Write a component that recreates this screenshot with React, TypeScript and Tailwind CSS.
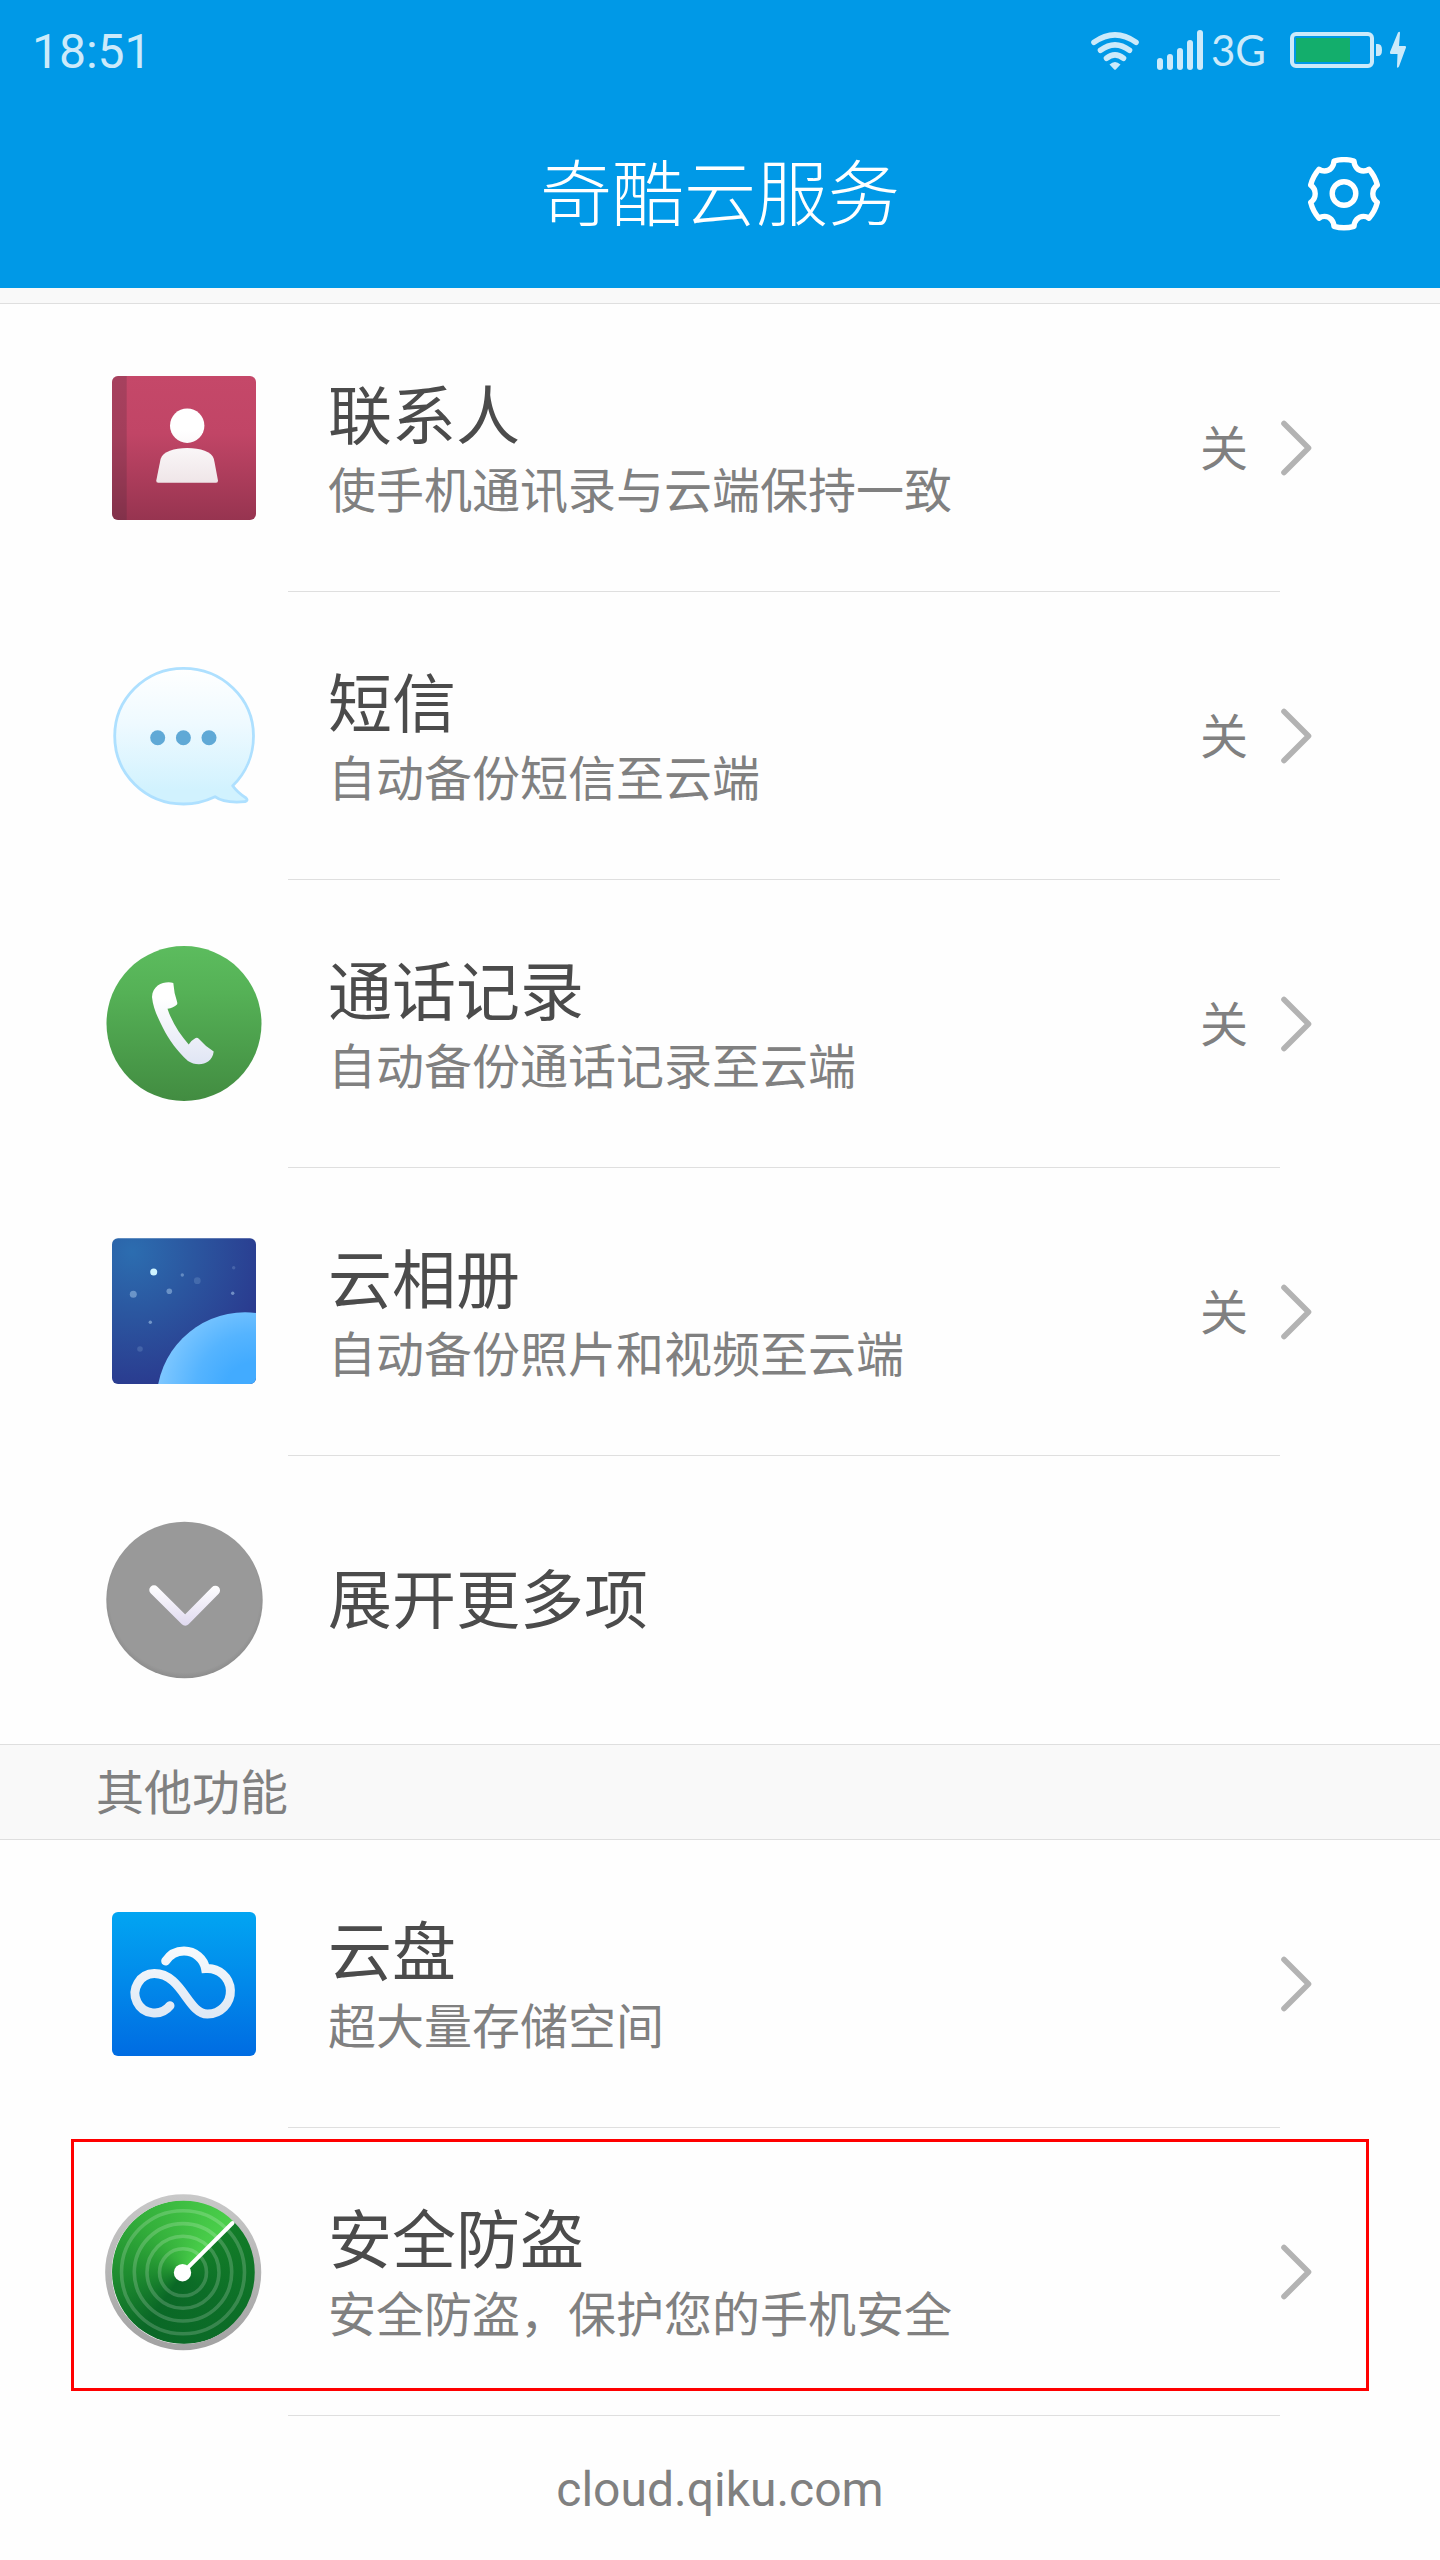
import React from "react";

type RowProps = {
  icon: React.ReactNode;
  title: string;
  desc?: string;
  state?: string;
  marked?: boolean;
};

function ContactsIcon() {
  return (
    <svg viewBox="0 0 160 160" className="size-40 shrink-0" aria-hidden="true">
      <defs>
        <linearGradient id="book" x1="0" y1="0" x2="0" y2="1">
          <stop offset="0" stopColor="#c54869" />
          <stop offset="0.4" stopColor="#c14566" />
          <stop offset="1" stopColor="#973450" />
        </linearGradient>
        <linearGradient id="person" x1="0" y1="40" x2="0" y2="115" gradientUnits="userSpaceOnUse">
          <stop offset="0.3" stopColor="#ffffff" />
          <stop offset="1" stopColor="#efe5e8" />
        </linearGradient>
      </defs>
      <rect x="8" y="8" width="144" height="144" rx="6" fill="url(#book)" />
      <path d="M14 8H22.7V152H14A6 6 0 0 1 8 146V14A6 6 0 0 1 14 8Z" fill="#3c2838" opacity="0.22" />
      <circle cx="83.2" cy="57.7" r="17.2" fill="url(#person)" />
      <path
        d="M52.3 112.5L56.6 91C59 83.5 70 80 83.2 80C96.5 80 107.5 83.5 109.9 91L114 112.5Q114.2 114.8 112 114.8H54.3Q52 114.8 52.3 112.5Z"
        fill="url(#person)"
      />
    </svg>
  );
}

function MessageIcon() {
  return (
    <svg viewBox="0 0 160 160" className="size-40 shrink-0" aria-hidden="true">
      <defs>
        <linearGradient id="bubble" x1="0" y1="0" x2="0" y2="1">
          <stop offset="0" stopColor="#ffffff" />
          <stop offset="0.4" stopColor="#effaff" />
          <stop offset="0.9" stopColor="#d1f2fe" />
        </linearGradient>
      </defs>
      <path
        d="M128.7 129.7C142 117 149.5 99 149.5 80C149.5 42 118 12.3 79.5 12.3C41 12.3 10.7 43 10.7 80C10.7 118 41 148 79.5 148C91 148 101 145.5 111 140.7C118 146 132 146.5 141 145.7Q144.5 144.5 142 142C136 138 131 133 128.7 129.7Z"
        fill="url(#bubble)"
        stroke="#aee0ff"
        strokeWidth="2.8"
        strokeLinejoin="round"
      />
      <circle cx="53.7" cy="81.7" r="7.5" fill="#60a9d6" />
      <circle cx="79.4" cy="81.7" r="7.5" fill="#60a9d6" />
      <circle cx="105" cy="81.7" r="7.5" fill="#60a9d6" />
    </svg>
  );
}

function PhoneIcon() {
  return (
    <svg viewBox="0 0 160 160" className="size-40 shrink-0" aria-hidden="true">
      <defs>
        <linearGradient id="call" x1="0" y1="0" x2="0" y2="1">
          <stop offset="0" stopColor="#5cbc5e" />
          <stop offset="0.3" stopColor="#55b156" />
          <stop offset="1" stopColor="#428c41" />
        </linearGradient>
        <linearGradient id="handset" x1="0" y1="0" x2="0" y2="1">
          <stop offset="0.2" stopColor="#ffffff" />
          <stop offset="1" stopColor="#e0e5f4" />
        </linearGradient>
      </defs>
      <circle cx="80" cy="79.5" r="77.5" fill="url(#call)" />
      <path
        d="M69.3 39C62 36.8 48.5 40 48 53C49 64 54 74 59 84C65 96 73 107 84 117C92 122.500 108 122 109.7 107.5Q101 102 94.500 94.5Q93 93 90.5 94.7Q87 96.5 84.7 100.5C76 90.5 68 78.5 63.5 64.7Q69.5 64 73 60.5Q73.6 59.5 73 57.5Q70 49 69.3 39Z"
        fill="url(#handset)"
      />
    </svg>
  );
}

function AlbumIcon() {
  return (
    <svg viewBox="0 0 160 160" className="size-40 shrink-0" aria-hidden="true">
      <defs>
        <radialGradient id="sky" cx="28" cy="20" r="150" gradientUnits="userSpaceOnUse">
          <stop offset="0" stopColor="#2c6db0" />
          <stop offset="0.4" stopColor="#2b57a0" />
          <stop offset="0.9" stopColor="#2a3b8f" />
        </radialGradient>
        <radialGradient id="planet" cx="150" cy="160" r="98" gradientUnits="userSpaceOnUse">
          <stop offset="0.3" stopColor="#42abff" />
          <stop offset="0.6" stopColor="#55b4ff" />
          <stop offset="1" stopColor="#80c8ff" />
        </radialGradient>
        <clipPath id="frame">
          <rect x="8" y="6.3" width="144" height="145.7" rx="6" />
        </clipPath>
      </defs>
      <g clipPath="url(#frame)">
        <rect x="8" y="6" width="144" height="147" fill="url(#sky)" />
        <circle cx="49.7" cy="40" r="3.5" fill="#cff4ff" />
        <g fill="#b8d8f4">
          <circle cx="29.3" cy="62.3" r="3.5" opacity="0.45" />
          <circle cx="65.3" cy="59.2" r="2.8" opacity="0.45" />
          <circle cx="78.3" cy="43" r="1.7" opacity="0.4" />
          <circle cx="93.3" cy="48.7" r="3.4" opacity="0.18" />
          <circle cx="129.7" cy="35.7" r="1.7" opacity="0.2" />
          <circle cx="128.7" cy="61.3" r="1.7" opacity="0.5" />
          <circle cx="46.3" cy="90.3" r="1.7" opacity="0.5" />
          <circle cx="36" cy="117" r="2.8" opacity="0.18" />
        </g>
        <circle cx="141" cy="168.6" r="88.3" fill="url(#planet)" />
      </g>
    </svg>
  );
}

function MoreIcon() {
  return (
    <svg viewBox="0 0 160 160" className="size-40 shrink-0" aria-hidden="true">
      <defs>
        <radialGradient id="disc" cx="80.5" cy="77" r="82" gradientUnits="userSpaceOnUse">
          <stop offset="0.92" stopColor="#999999" />
          <stop offset="1" stopColor="#8b8b8b" />
        </radialGradient>
        <linearGradient id="arrow" x1="0" y1="65" x2="0" y2="105" gradientUnits="userSpaceOnUse">
          <stop offset="0" stopColor="#ffffff" />
          <stop offset="1" stopColor="#e0daf0" />
        </linearGradient>
      </defs>
      <circle cx="80.5" cy="80" r="78.2" fill="url(#disc)" />
      <path
        d="M50 70L81.2 101L111.3 70.5"
        fill="none"
        stroke="url(#arrow)"
        strokeWidth="9.5"
        strokeLinecap="round"
        strokeLinejoin="round"
      />
    </svg>
  );
}

function DiskIcon() {
  return (
    <svg viewBox="0 0 160 160" className="size-40 shrink-0" aria-hidden="true">
      <defs>
        <linearGradient id="disk" x1="0" y1="0" x2="0" y2="1">
          <stop offset="0" stopColor="#02a5f2" />
          <stop offset="1" stopColor="#006ce2" />
        </linearGradient>
        <linearGradient id="cloud" x1="0" y1="0" x2="0" y2="1">
          <stop offset="0" stopColor="#f6f9fc" />
          <stop offset="1" stopColor="#dfe9f5" />
        </linearGradient>
      </defs>
      <rect x="8" y="8" width="144" height="144" rx="6" fill="url(#disk)" />
      <path
        d="M61.7 57C66 50.5 73 47 80 47C91 47 99.8 55 101.5 64.5A22.8 22.8 0 1 1 103.3 110C84 110 78 69.6 50.3 69.6A19.7 19.7 0 1 0 66 101.7"
        fill="none"
        stroke="url(#cloud)"
        strokeWidth="9"
        strokeLinecap="round"
      />
    </svg>
  );
}

function RadarIcon() {
  return (
    <div className="grid size-40 shrink-0 place-items-center" aria-hidden="true">
      <div className="col-start-1 row-start-1 size-36 rounded-full bg-[conic-gradient(from_45deg,#127d28,#0c6d27_90deg,#0a6826_170deg,#1f8e30_225deg,#35b13c_280deg,#4bd04b_360deg)]" />
      <svg viewBox="0 0 160 160" className="col-start-1 row-start-1 size-40">
        <defs>
          <linearGradient id="rim" x1="0" y1="0" x2="0" y2="160" gradientUnits="userSpaceOnUse">
            <stop offset="0" stopColor="#c9c9c9" />
            <stop offset="1" stopColor="#a1a1a1" />
          </linearGradient>
        </defs>
        <g fill="none" stroke="#ffffff" strokeWidth="3.6" opacity="0.18">
          <circle cx="79" cy="80.3" r="23.5" />
          <circle cx="79" cy="80.3" r="36" />
          <circle cx="79" cy="80.3" r="48.7" />
          <circle cx="79" cy="80.3" r="61.5" />
        </g>
        <circle cx="79.2" cy="80.3" r="74.8" fill="none" stroke="url(#rim)" strokeWidth="6.5" />
        <path d="M79 80.3L128.5 31" stroke="#ffffff" strokeWidth="4" strokeLinecap="round" />
        <circle cx="78.5" cy="80.7" r="8.7" fill="#ffffff" />
      </svg>
    </div>
  );
}

function GearIcon() {
  return (
    <svg viewBox="0 0 72 74" className="h-[74px] w-[72px]" fill="none" stroke="#ffffff" aria-hidden="true">
      <path
        d="M26 4Q36 1.2 46 4C46.2 9.5 50 14 55.5 14Q58.5 14 61 12.2Q67 19 69.3 28Q64.8 31.5 64.8 36.7Q64.8 42 69.3 45.4Q67 54.5 61 61.2Q58.5 59.4 55.5 59.4C50 59.4 46.2 64 46 69.4Q36 72.2 26 69.4C25.8 64 22 59.4 16.5 59.4Q13.5 59.4 11 61.2Q5 54.5 2.7 45.4Q7.2 42 7.2 36.7Q7.2 31.5 2.7 28Q5 19 11 12.2Q13.5 14 16.5 14C22 14 25.8 9.5 26 4Z"
        strokeWidth="5.4"
        strokeLinejoin="round"
      />
      <circle cx="36" cy="36.5" r="11.8" strokeWidth="5.4" />
    </svg>
  );
}

function StatusBar() {
  return (
    <div className="flex h-[100px] items-center justify-between px-8 text-[#cceafa]">
      <span className="pt-1 text-5xl leading-none">18:51</span>
      <div className="flex items-center">
        <svg viewBox="0 0 48 40" className="mr-4.5 h-10 w-12" fill="none" stroke="currentColor" aria-label="Wi-Fi">
          <g strokeWidth="5.6" strokeLinecap="round">
            <path d="M3 12.3Q24 -2.5 45 12.3" />
            <path d="M9.5 20.3Q24 9.5 38.5 20.3" />
            <path d="M15.5 28.3Q24 21.5 32.5 28.3" />
          </g>
          <path d="M18.5 34.5Q24 29.5 29.5 34.5L25 39.3Q24 40.3 23 39.3Z" fill="currentColor" stroke="none" />
        </svg>
        <svg viewBox="0 0 46 40" className="mr-2 h-10 w-[46px]" fill="currentColor" aria-label="Signal">
          <rect x="0" y="28" width="6" height="12" rx="3" />
          <rect x="10" y="24" width="6" height="16" rx="3" />
          <rect x="20" y="18" width="6" height="22" rx="3" />
          <rect x="30" y="10" width="6" height="30" rx="3" />
          <rect x="40" y="0" width="6" height="40" rx="3" />
        </svg>
        <span className="mr-6 font-['Lato','Noto_Sans',sans-serif] text-[42px] leading-none">3G</span>
        <svg viewBox="0 0 118 40" className="h-10 w-[118px]" aria-label="Charging">
          <rect x="2" y="4" width="80" height="32" rx="4" fill="none" stroke="currentColor" strokeWidth="4" />
          <rect x="6" y="8" width="54" height="24" fill="#13ae6c" />
          <path d="M86 14H88Q92 14 92 20Q92 26 88 26H86Z" fill="currentColor" />
          <path
            d="M108 2.5Q110 1 110 3L109 16H115Q116.500 16 116 17.5L109 36.5Q107 39 107 36.5L107.5 24H101Q99.5 24 100 22Z"
            fill="currentColor"
          />
        </svg>
      </div>
    </div>
  );
}

function Row({ icon, title, desc, state, marked }: RowProps) {
  return (
    <li className="relative">
      <a href="#" className="flex min-h-[287px] items-center gap-16 pr-32 pl-26">
        {icon}
        <div className="min-w-0 flex-1 pt-1">
          <p className="text-[64px] leading-[84px] text-[#4b4b4b]">{title}</p>
          <p className="text-5xl leading-[64px] text-[#808080]">{desc}</p>
        </div>
        {state && <span className="-mr-8 pt-1 text-5xl leading-none text-[#808080]">{state}</span>}
        <svg
          viewBox="0 0 32 60"
          className="h-15 w-8 shrink-0"
          fill="none"
          stroke="#b3b3b3"
          strokeWidth="5.6"
          strokeLinecap="round"
          strokeLinejoin="round"
          aria-hidden="true"
        >
          <path d="M4 5.5L28.500 30L4 54.5" />
        </svg>
      </a>
      <div className="mr-40 ml-72 h-px bg-[#dfdfdf]" />
      {marked && (
        <div className="pointer-events-none absolute inset-x-[71px] top-[11px] bottom-[25px] border-3 border-[#ff0000]" />
      )}
    </li>
  );
}

function App() {
  return (
    <div className="min-h-screen bg-[#fefefe] font-['Roboto','Noto_Sans_CJK_SC',sans-serif]">
      <header className="bg-[#0099e7]">
        <StatusBar />
        <div className="grid h-[188px] grid-cols-[1fr_auto_1fr] items-center">
          <h1 className="col-start-2 pt-1 text-[72px] leading-none font-light text-white">奇酷云服务</h1>
          <button type="button" aria-label="设置" className="mr-15 justify-self-end">
            <GearIcon />
          </button>
        </div>
      </header>
      <div className="h-4 border-b border-[#dfdfdf] bg-[#f9f9f9]" />

      <main>
        <ul>
          <Row icon={<ContactsIcon />} title="联系人" desc="使手机通讯录与云端保持一致" state="关" />
          <Row icon={<MessageIcon />} title="短信" desc="自动备份短信至云端" state="关" />
          <Row icon={<PhoneIcon />} title="通话记录" desc="自动备份通话记录至云端" state="关" />
          <Row icon={<AlbumIcon />} title="云相册" desc="自动备份照片和视频至云端" state="关" />
          <li>
            <button type="button" className="flex min-h-72 w-full items-center gap-16 pl-26">
              <MoreIcon />
              <span className="pt-1 text-[64px] leading-[84px] text-[#4b4b4b]">展开更多项</span>
            </button>
          </li>
        </ul>

        <h2 className="border-y border-[#dfdfdf] bg-[#f9f9f9] pt-[18px] pb-[14px] pl-24 text-5xl leading-[62px] text-[#808080]">
          其他功能
        </h2>
        <ul>
          <Row icon={<DiskIcon />} title="云盘" desc="超大量存储空间" />
          <Row icon={<RadarIcon />} title="安全防盗" desc="安全防盗，保护您的手机安全" marked />
        </ul>
      </main>

      <footer className="flex h-36 items-center justify-center pt-1 text-5xl leading-none text-[#808080]">
        <a href="#">cloud.qiku.com</a>
      </footer>
    </div>
  );
}

export default App;
